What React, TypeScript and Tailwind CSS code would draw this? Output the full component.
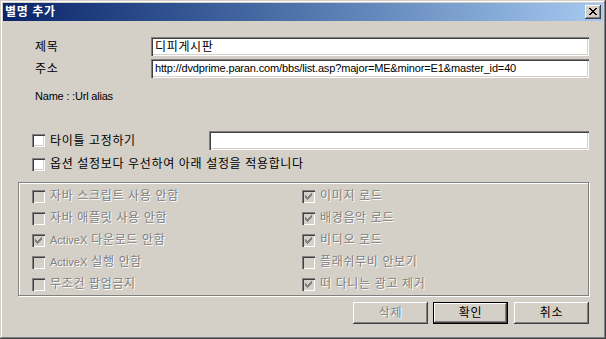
import React from "react";

const sunken =
  "shadow-[inset_1px_1px_0_#808080,inset_2px_2px_0_#404040,inset_-1px_-1px_0_#ffffff,inset_-2px_-2px_0_#d4d0c8]";
const raised =
  "shadow-[inset_-1px_-1px_0_#404040,inset_1px_1px_0_#ffffff,inset_-2px_-2px_0_#808080]";
const dim = "text-[#808080] [text-shadow:1px_1px_0_#ffffff]";

function CheckBox({ checked = false, disabled = false }: { checked?: boolean; disabled?: boolean }) {
  return (
    <div
      className={`relative w-[13px] h-[13px] shrink-0 ${sunken} ${disabled ? "bg-[#d4d0c8]" : "bg-white"}`}
    >
      {checked && (
        <svg
          className="absolute left-[3px] top-[3px]"
          width="7"
          height="7"
          viewBox="0 0 7 7"
          shapeRendering="crispEdges"
        >
          <path
            d="M6 0h1v1h-1z M5 1h2v1h-2z M0 2h1v1h-1z M4 2h3v1h-3z M0 3h2v1h-2z M3 3h3v1h-3z M0 4h5v1h-5z M1 5h3v1h-3z M2 6h1v1h-1z"
            fill={disabled ? "#808080" : "#000000"}
          />
        </svg>
      )}
    </div>
  );
}

function Option({ label, checked }: { label: React.ReactNode; checked?: boolean }) {
  return (
    <div className="flex items-center h-[22px]">
      <CheckBox checked={checked} disabled />
      <span className={`ml-[5px] text-[12px] leading-[14px] whitespace-nowrap ${dim}`}>{label}</span>
    </div>
  );
}

function Button({ children, disabled, primary }: { children: React.ReactNode; disabled?: boolean; primary?: boolean }) {
  if (primary) {
    return (
      <div className="w-[75px] h-[22px] border border-black">
        <div className={`w-full h-full flex items-center justify-center text-[12px] ${raised}`}>
          {children}
        </div>
      </div>
    );
  }
  return (
    <div
      className={`w-[75px] h-[22px] flex items-center justify-center text-[12px] ${raised} ${disabled ? dim : "text-black"}`}
    >
      {children}
    </div>
  );
}

export default function App() {
  return (
    <div className="w-[606px] h-[339px] bg-[#d4d0c8] p-[3px] text-black tracking-[0.65px] font-['Liberation_Sans','Noto_Sans_CJK_KR',sans-serif] shadow-[inset_-1px_-1px_0_#404040,inset_1px_1px_0_#d4d0c8,inset_-2px_-2px_0_#808080,inset_2px_2px_0_#ffffff]">
      {/* title bar */}
      <div className="h-[18px] flex items-center justify-between bg-linear-to-r from-[#0a246a] to-[#a6caf0] pl-[2px] pr-[2px]">
        <span className="text-white font-bold text-[12px] leading-[14px]">별명 추가</span>
        <div className={`w-[16px] h-[14px] bg-[#d4d0c8] relative ${raised}`}>
          <svg
            className="absolute left-[4px] top-[3px]"
            width="8"
            height="7"
            viewBox="0 0 8 7"
            shapeRendering="crispEdges"
          >
            <path
              d="M0 0h2v1h-2z M6 0h2v1h-2z M1 1h2v1h-2z M5 1h2v1h-2z M2 2h4v1h-4z M3 3h2v1h-2z M2 4h4v1h-4z M1 5h2v1h-2z M5 5h2v1h-2z M0 6h2v1h-2z M6 6h2v1h-2z"
              fill="#000"
            />
          </svg>
        </div>
      </div>

      {/* body */}
      <div className="pl-[15px] w-[586px] flex flex-col">
        <div className="mt-[16px] flex items-center">
          <span className="w-[133px] pl-[17px] text-[12px] leading-[14px]">제목</span>
          <div className={`w-[438px] h-[19px] bg-white flex items-center pl-[4px] text-[12px] ${sunken}`}>
            디피게시판
          </div>
        </div>
        <div className="mt-[3px] flex items-center">
          <span className="w-[133px] pl-[17px] text-[12px] leading-[14px]">주소</span>
          <div className={`w-[438px] h-[19px] bg-white flex items-center pl-[4px] text-[11px] tracking-[-0.15px] whitespace-nowrap ${sunken}`}>
            http://dvdprime.paran.com/bbs/list.asp?major=ME&amp;minor=E1&amp;master_id=40
          </div>
        </div>
        <div className="mt-[11px] pl-[17px] h-[14px] text-[11px] leading-[14px] tracking-[-0.2px]">Name : :Url alias</div>

        <div className="mt-[28px] flex items-center h-[19px]">
          <div className="ml-[14px]">
            <CheckBox />
          </div>
          <span className="ml-[5px] w-[159px] text-[12px] leading-[14px]">타이틀 고정하기</span>
          <div className={`w-[380px] h-[19px] bg-white ${sunken}`} />
        </div>
        <div className="mt-[7px] flex items-center h-[14px]">
          <div className="ml-[14px]">
            <CheckBox />
          </div>
          <span className="ml-[5px] text-[12px] leading-[14px] whitespace-nowrap">옵션 설정보다 우선하여 아래 설정을 적용합니다</span>
        </div>

        {/* group box */}
        <div className="mt-[11px] w-[571px] h-[114px] border border-[#808080] shadow-[1px_1px_0_#ffffff,inset_1px_1px_0_#ffffff] pt-[2px] pl-[13px] flex">
          <div className="w-[270px] flex flex-col">
            <Option label="자바 스크립트 사용 안함" />
            <Option label="자바 애플릿 사용 안함" />
            <Option label={<><span className="text-[11px] tracking-normal">ActiveX</span> 다운로드 안함</>} checked />
            <Option label={<><span className="text-[11px] tracking-normal">ActiveX</span> 실행 안함</>} />
            <Option label="무조건 팝업금지" />
          </div>
          <div className="flex flex-col">
            <Option label="이미지 로드" checked />
            <Option label="배경음악 로드" checked />
            <Option label="비디오 로드" checked />
            <Option label="플래쉬무비 안보기" />
            <Option label="떠 다니는 광고 제거" checked />
          </div>
        </div>

        {/* buttons */}
        <div className="mt-[6px] w-[571px] flex justify-end">
          <Button disabled>삭제</Button>
          <div className="ml-[5px]">
            <Button primary>확인</Button>
          </div>
          <div className="ml-[6px]">
            <Button>취소</Button>
          </div>
        </div>
      </div>
    </div>
  );
}
